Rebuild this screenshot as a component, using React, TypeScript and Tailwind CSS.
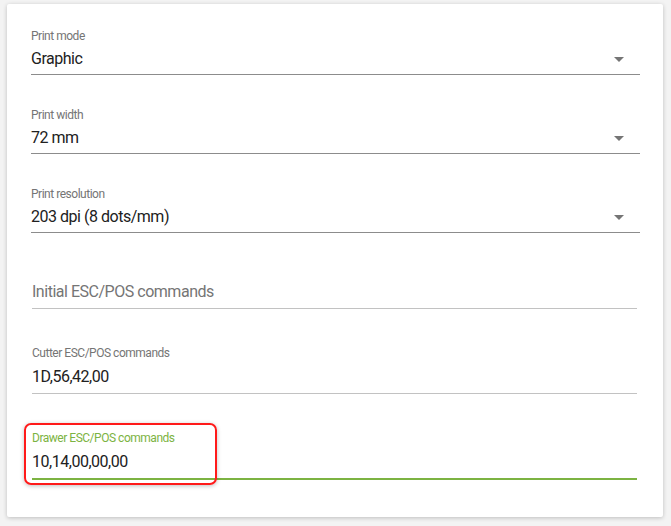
import React from "react";

function Caret() {
  return (
    <svg width="10" height="5" viewBox="0 0 10 5" className="shrink-0">
      <path d="M0 0 L10 0 L5 5 Z" fill="#757575" />
    </svg>
  );
}

function SelectField({ label, value, last }: { label: string; value: string; last?: boolean }) {
  return (
    <div className={`ml-[24px] mr-[23px] ${last ? "mb-[28px]" : "mb-[33px]"}`}>
      <div className="h-[14px] text-[12px] leading-[14px] text-[#757575]">{label}</div>
      <div className="mt-[4px] flex items-center justify-between border-b border-[#8c8c8c] pb-[3px]">
        <span className="h-[24px] text-[16px] leading-[24px] text-[#212121]">{value}</span>
        <span className="mr-[16px]">
          <Caret />
        </span>
      </div>
    </div>
  );
}

function TextField({
  label,
  value,
  placeholder,
  focused,
}: {
  label?: string;
  value?: string;
  placeholder?: string;
  focused?: boolean;
}) {
  return (
    <div className="ml-[25px] mr-[26px]">
      <div
        className={`h-[14px] text-[12px] leading-[14px] ${focused ? "text-[#7cb342]" : "text-[#757575]"}`}
      >
        {label ?? ""}
      </div>
      <div
        className={`mt-[5px] pb-[4px] ${
          focused ? "border-b-2 border-[#7cb342]" : "border-b border-[#c2c2c2]"
        }`}
      >
        <div
          className={`h-[24px] text-[16px] leading-[24px] ${value ? "text-[#212121]" : "text-[#757575]"}`}
        >
          {value ?? placeholder}
        </div>
      </div>
    </div>
  );
}

export default function App() {
  return (
    <div
      className="w-[671px] h-[526px] bg-[#f3f3f3] pt-[4px] pl-[7px] tracking-[-0.03em]"
      style={{ fontFamily: "Roboto, 'Liberation Sans', sans-serif" }}
    >
      <div className="w-[656px] h-[513px] bg-white rounded-[2px] shadow-[0_1px_4px_rgba(0,0,0,0.22)] pt-[25px]">
        <SelectField label="Print mode" value="Graphic" />
        <SelectField label="Print width" value="72 mm" />
        <SelectField label="Print resolution" value="203 dpi (8 dots/mm)" last />

        <TextField placeholder="Initial ESC/POS commands" />
        <div className="h-[37px]" />
        <TextField label="Cutter ESC/POS commands" value="1D,56,42,00" />
        <div className="h-[37px]" />
        <div className="relative">
          <TextField label="Drawer ESC/POS commands" value="10,14,00,00,00" focused />
          <div className="absolute left-[17px] top-[-8px] w-[193px] h-[62px] rounded-[7px] border-2 border-[#ff1a1a] shadow-[0_1px_4px_rgba(0,0,0,0.25)] pointer-events-none" />
        </div>
      </div>
    </div>
  );
}
